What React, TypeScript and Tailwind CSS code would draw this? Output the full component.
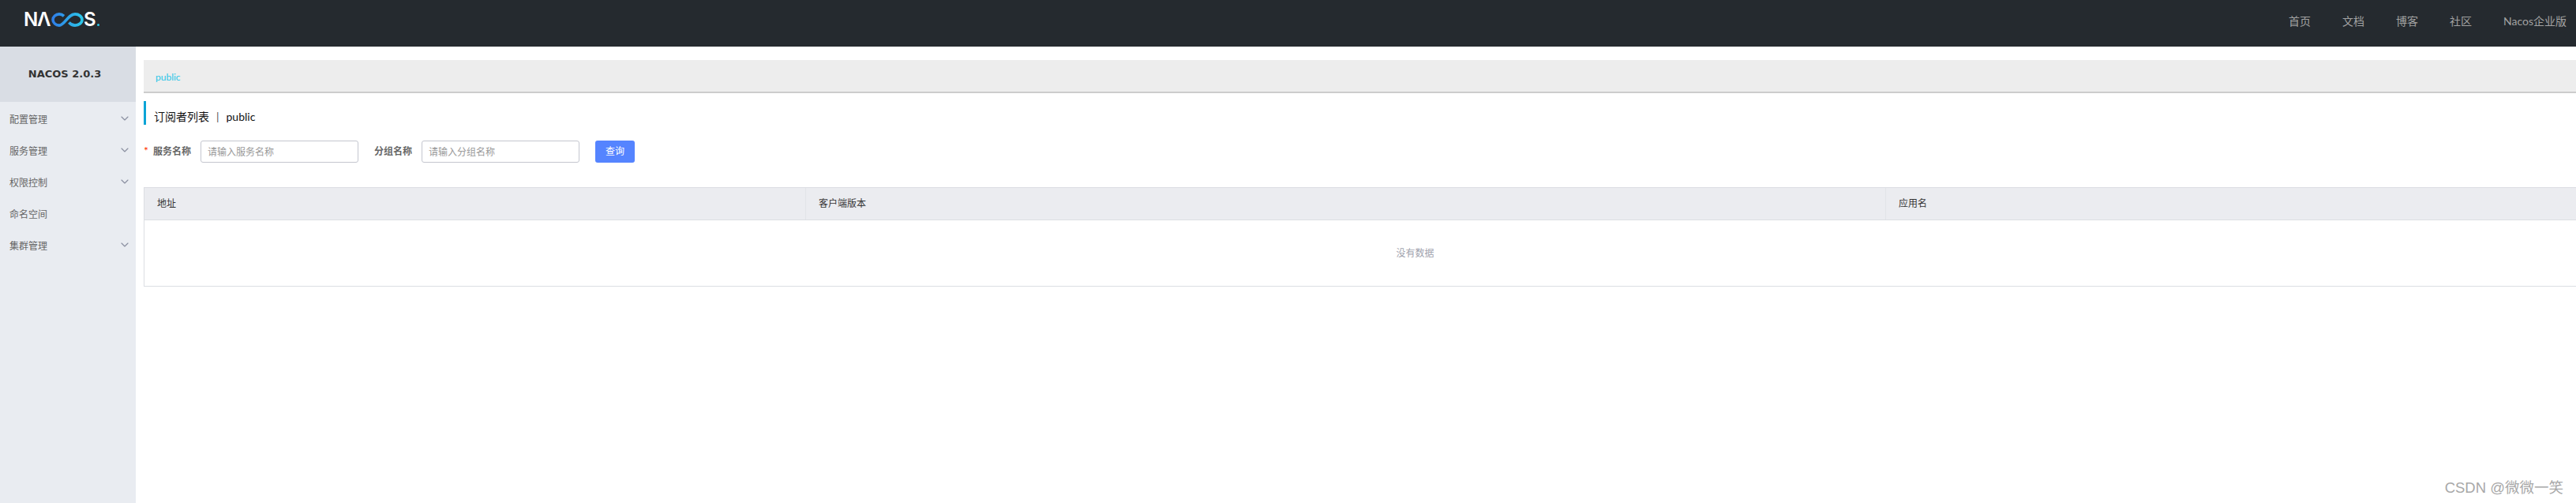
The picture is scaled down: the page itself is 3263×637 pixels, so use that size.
import { ChevronDown } from 'lucide-react'

const fontStack = "font-['Lato','Noto_Sans_CJK_SC',sans-serif]"

const navLinks = ['首页', '文档', '博客', '社区', 'Nacos企业版']

const menu = [
  { label: '配置管理', arrow: true },
  { label: '服务管理', arrow: true },
  { label: '权限控制', arrow: true },
  { label: '命名空间', arrow: false },
  { label: '集群管理', arrow: true },
]

function Logo() {
  return (
    <div className="flex items-center h-[18px] mb-[10px] text-white text-[24px] leading-none font-['Inter',sans-serif] font-semibold">
      <span className="w-[17px] -tracking-[1px]">N</span>
      <span className="w-[18px]">Λ</span>
      <svg viewBox="0 0 41 18" className="w-[41px] h-[18px] shrink-0" fill="none" strokeWidth="3.6">
        <defs>
          <linearGradient id="nacosInf" x1="0" x2="1" y1="0" y2="0">
            <stop offset="0" stopColor="#2f7fe8" />
            <stop offset="1" stopColor="#2cc6e8" />
          </linearGradient>
        </defs>
        <path
          d="M16 4.4C14 2.6 12 1.9 10 1.9 5.6 1.9 2 5.1 2 9s3.6 7.1 8 7.1c7 0 11-14.2 20-14.2 5 0 9 3.2 9 7.1s-4 7.1-9 7.1c-3 0-5.600-1.300-7.600-3.600"
          stroke="url(#nacosInf)"
        />
      </svg>
      <span className="w-[18px]">S</span>
      <div className="self-end w-[3px] h-[3px] mb-[1px] -ml-[1px] rounded-full bg-[#2cc6e8]" />
    </div>
  )
}

function Field({ label, placeholder, required }: { label: string; placeholder: string; required?: boolean }) {
  return (
    <div className="flex items-center">
      {required && <span className="w-[12px] text-[#ff3000] text-[14px] leading-none -mt-[3px]">*</span>}
      <label className="w-[48px] text-[12px] font-bold text-[#666666]">{label}</label>
      <input
        placeholder={placeholder}
        className="ml-[12px] w-[200px] h-[28px] px-[8px] text-[12px] bg-white border border-[#c4c6cf] rounded-[3px] placeholder:text-[#999999]"
      />
    </div>
  )
}

export default function App() {
  return (
    <div className={`relative w-[3263px] h-[637px] overflow-hidden bg-white ${fontStack}`}>
      <header className="flex items-center justify-between h-[59px] pl-[30px] pr-[8px] bg-[#252a2f]">
        <Logo />
        <nav className="flex items-center gap-[40px] pr-[4px] pb-[7px] text-[14px] text-[#a2a2a2]">
          {navLinks.map((link) => (
            <a key={link}>{link}</a>
          ))}
        </nav>
      </header>

      <div className="flex h-[578px]">
        <aside className="w-[172px] shrink-0 bg-[#e9ecf1]">
          <div className="flex items-center justify-center h-[70px] pr-[8px] bg-[#d9dde4] text-[13px] font-bold text-[#333333] font-['DejaVu_Sans',sans-serif]">
            NACOS 2.0.3
          </div>
          <ul className="pt-[3px]">
            {menu.map((item) => (
              <li key={item.label} className="flex items-center justify-between h-[40px] pl-[12px] pr-[6px] text-[12px] text-[#666666]">
                <span>{item.label}</span>
                {item.arrow && <ChevronDown className="w-[16px] h-[16px] -mt-[5px] text-[#8a8fa0]" strokeWidth={1.75} />}
              </li>
            ))}
          </ul>
        </aside>

        <main className="flex-1 min-w-0 pl-[10px] pt-[17px]">
          <div className="h-[42px] pl-[15px] pt-[14px] bg-[#ededed] border-b-2 border-[#cccccc] text-[12px] leading-[16px] text-[#2cc6e8]">
            public
          </div>

          <h1 className="flex items-center h-[30px] mt-[10px] pl-[10px] pt-[8px] border-l-[3px] border-[#09a4d6] text-[14px] text-[#111111]">
            <span>订阅者列表</span>
            <span className="mx-[9px] text-[#555555]">|</span>
            <span>public</span>
          </h1>

          <form className="flex items-center gap-[20px] mt-[20px]">
            <Field label="服务名称" placeholder="请输入服务名称" required />
            <Field label="分组名称" placeholder="请输入分组名称" />
            <button type="button" className="w-[50px] h-[28px] rounded-[3px] bg-[#5584ff] text-white text-[12px]">
              查询
            </button>
          </form>

          <div className="w-[3221px] mt-[31px] border border-[#dcdee3] text-[12px]">
            <div className="flex h-[41px] bg-[#ebecf0] border-b border-[#dcdee3] text-[#333333]">
              <div className="flex items-center w-[838px] pl-[16px] border-r border-[#e2e4e8]">地址</div>
              <div className="flex items-center w-[1368px] pl-[16px] border-r border-[#e2e4e8]">客户端版本</div>
              <div className="flex items-center flex-1 pl-[16px]">应用名</div>
            </div>
            <div className="flex items-center justify-center h-[83px] text-[#a0a2ad]">没有数据</div>
          </div>
        </main>
      </div>

      <div className="absolute right-[16px] bottom-[7px] text-[18.5px] leading-[24px] text-[#a8a8a8] font-['Liberation_Sans','Noto_Sans_CJK_SC',sans-serif]">
        CSDN @微微一笑
      </div>
    </div>
  )
}
